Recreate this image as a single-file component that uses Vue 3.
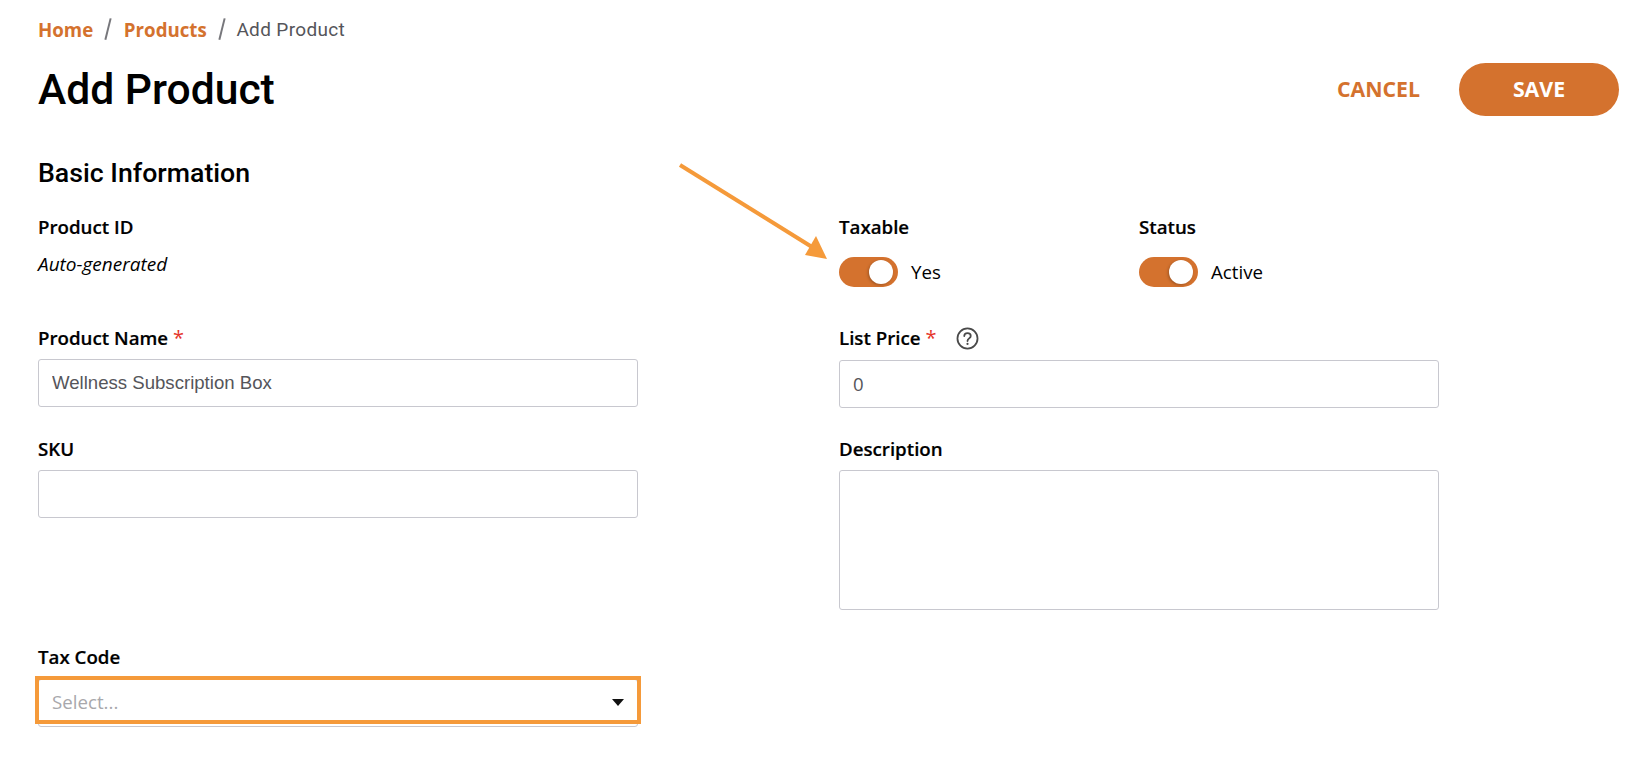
<script setup>
const fieldName = 'Wellness Subscription Box'
</script>

<template>
  <div class="page">
    <nav class="crumbs">
      <a class="crumb-link">Home</a>
      <span class="sep"></span>
      <a class="crumb-link">Products</a>
      <span class="sep"></span>
      <span class="crumb-current">Add Product</span>
    </nav>

    <header class="head">
      <h1>Add Product</h1>
      <div class="actions">
        <button class="cancel">CANCEL</button>
        <button class="save">SAVE</button>
      </div>
    </header>

    <h2>Basic Information</h2>

    <div class="form">
      <div class="col">
        <div class="field f-id">
          <label>Product ID</label>
          <em>Auto-generated</em>
        </div>
        <div class="field f-name">
          <label>Product Name <span class="req">*</span></label>
          <input class="input" :value="fieldName" />
        </div>
        <div class="field f-sku">
          <label>SKU</label>
          <input class="input" value="" />
        </div>
        <div class="field f-tax">
          <label>Tax Code</label>
          <div class="input select">
            <span class="placeholder">Select...</span>
            <span class="caret"></span>
          </div>
          <div class="highlight"></div>
        </div>
      </div>

      <div class="col">
        <div class="toggles">
          <div class="field toggle-field">
            <label>Taxable</label>
            <div class="toggle-row">
              <span class="toggle"><span class="knob"></span></span>
              <span class="toggle-text">Yes</span>
            </div>
          </div>
          <div class="field toggle-field">
            <label>Status</label>
            <div class="toggle-row">
              <span class="toggle"><span class="knob"></span></span>
              <span class="toggle-text">Active</span>
            </div>
          </div>
        </div>
        <div class="field f-price">
          <label class="with-help">
            <span>List Price <span class="req">*</span></span>
            <svg class="help" viewBox="0 0 22 22" width="23" height="23" fill="none" stroke="#4a4a4a" stroke-width="1.7" stroke-linecap="round">
              <circle cx="11" cy="11" r="9.6" />
              <path d="M7.9 8.7c0-1.8 1.4-2.9 3.1-2.9s3.1 1.1 3.1 2.7c0 2.4-3.1 2.4-3.1 4.9" />
              <path d="M11 16.1v.2" stroke-width="2" />
            </svg>
          </label>
          <input class="input num" value="0" />
        </div>
        <div class="field f-desc">
          <label>Description</label>
          <textarea class="input area"></textarea>
        </div>
      </div>
    </div>

    <svg class="arrow" viewBox="0 0 170 110" width="170" height="110">
      <path d="M2 2 L134 84" stroke="#f59a3a" stroke-width="4" fill="none" />
      <path d="M149 96 L127 92 L138 73 Z" fill="#f59a3a" />
    </svg>
  </div>
</template>

<style>
html, body { background: #fff; margin: 0; }
</style>

<style scoped>
.page {
  position: relative;
  width: 1646px;
  height: 758px;
  overflow: hidden;
  box-sizing: border-box;
  padding: 17px 27px 0 38px;
  background: #fff;
  font-family: "Open Sans", sans-serif;
  color: #000;
}
.crumbs {
  display: flex;
  align-items: center;
  height: 24px;
  font-size: 18.7px;
}
.crumb-link {
  font-weight: 700;
  color: #d4722e;
}
.crumb-current {
  font-family: Roboto, sans-serif;
  font-size: 19px;
  letter-spacing: 0.35px;
  color: #55555a;
  margin-left: -1px;
}
.sep {
  width: 1.6px;
  height: 22px;
  margin: 0 15px 0 14px;
  background: #77777c;
  transform: rotate(14deg);
}
.head {
  display: flex;
  align-items: center;
  justify-content: space-between;
  margin-top: 21px;
  height: 54px;
}
h1 {
  margin: 0;
  font-family: Roboto, sans-serif;
  font-weight: 500;
  font-size: 42.6px;
  line-height: 54px;
  color: #000;
}
.actions {
  display: flex;
  align-items: center;
  gap: 39px;
}
button {
  border: 0;
  font-family: "Open Sans", sans-serif;
  font-weight: 700;
  font-size: 21.3px;
  padding: 0 0 2px;
  cursor: pointer;
}
.cancel {
  background: none;
  color: #d4722e;
}
.save {
  width: 160px;
  height: 53px;
  border-radius: 27px;
  background: #d4722e;
  color: #fff;
}
h2 {
  margin: 41px 0 0;
  font-family: Roboto, sans-serif;
  font-weight: 500;
  font-size: 26.7px;
  line-height: 32px;
}
.form {
  display: grid;
  grid-template-columns: 600px 600px;
  column-gap: 201px;
  margin-top: 26px;
}
.col {
  display: flex;
  flex-direction: column;
}
.field {
  display: flex;
  flex-direction: column;
  position: relative;
}
label {
  font-weight: 600;
  font-size: 18.7px;
  line-height: 24px;
  color: #000;
  -webkit-text-stroke: 0.2px #000;
}
.req {
  color: #e5352a;
  font-size: 20px;
  font-weight: 400;
  -webkit-text-stroke: 0;
}
em {
  margin-top: 13px;
  font-size: 19px;
  line-height: 24px;
  font-style: italic;
}
.f-id { height: 111px; }
.f-name { height: 111px; }
.f-sku { height: 208px; }
.input {
  display: block;
  box-sizing: border-box;
  width: 100%;
  height: 48px;
  margin-top: 9px;
  padding: 0 13px;
  border: 1px solid #c8c8cf;
  border-radius: 3px;
  background: #fff;
  font-family: "Liberation Sans", Arial, sans-serif;
  font-size: 18.6px;
  color: #55555a;
  outline: none;
}
.num {
  margin-top: 10px;
  padding-bottom: 2px;
  font-family: "Open Sans", sans-serif;
}
.select {
  display: flex;
  align-items: center;
  justify-content: space-between;
  padding-right: 13px;
  padding-bottom: 4px;
  margin-top: 10px;
  font-family: "Open Sans", sans-serif;
}
.placeholder {
  color: #a8a8ac;
  font-size: 18.7px;
}
.caret {
  width: 0;
  height: 0;
  margin-top: 2px;
  border-left: 6.5px solid transparent;
  border-right: 6.5px solid transparent;
  border-top: 7px solid #111;
}
.highlight {
  position: absolute;
  left: -3px;
  right: -3px;
  top: 31px;
  height: 48px;
  box-sizing: border-box;
  border: 4px solid #f59a3a;
}
.toggles {
  display: flex;
  height: 111px;
}
.toggle-field { width: 300px; }
.toggle-row {
  display: flex;
  align-items: center;
  gap: 13px;
  margin-top: 18px;
}
.toggle {
  position: relative;
  width: 59px;
  height: 30px;
  border-radius: 15px;
  background: #d4722e;
}
.knob {
  position: absolute;
  right: 5px;
  top: 3px;
  width: 24px;
  height: 24px;
  border-radius: 50%;
  background: #fff;
  box-shadow: -1px 1px 3px rgba(0, 0, 0, .25);
}
.toggle-text {
  font-size: 18.7px;
  line-height: 24px;
}
.with-help {
  display: flex;
  align-items: center;
  gap: 20px;
}
.help { flex: none; }
.f-price { height: 111px; }
.area {
  height: 140px;
  resize: none;
}
.arrow {
  position: absolute;
  left: 678px;
  top: 163px;
}
</style>
